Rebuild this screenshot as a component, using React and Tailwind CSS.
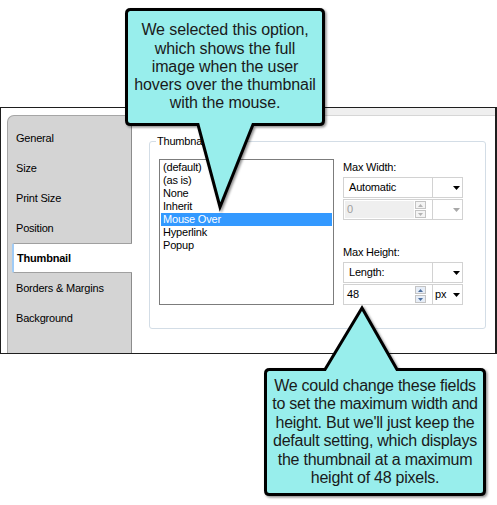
// App.jsx — image properties dialog (Thumbnail tab) with two annotation callouts.

const TABS = ['General', 'Size', 'Print Size', 'Position', 'Thumbnail', 'Borders & Margins', 'Background']
const OPTIONS = ['(default)', '(as is)', 'None', 'Inherit', 'Mouse Over', 'Hyperlink', 'Popup']

function Arrow({ muted }) {
  return (
    <svg width="7" height="4" viewBox="0 0 7 4" className="block">
      <path d="M0 0 H7 L3.5 4 Z" fill={muted ? '#a8a8a8' : '#000'} />
    </svg>
  )
}

function Spinner({ muted }) {
  const fg = muted ? '#b4b4b4' : '#4d6f9e'
  const bg = muted ? '#f4f4f4' : '#e6edf7'
  return (
    <div className="flex h-[17px] w-[11px] flex-col gap-px">
      {[0, 1].map((i) => (
        <div key={i} className="flex flex-1 items-center justify-center border border-[#c4c4c4]" style={{ backgroundColor: bg }}>
          <svg width="5" height="3" viewBox="0 0 5 3" className="block">
            <path d={i === 0 ? 'M0 3 H5 L2.5 0 Z' : 'M0 0 H5 L2.5 3 Z'} fill={fg} />
          </svg>
        </div>
      ))}
    </div>
  )
}

function Select({ children, muted }) {
  return (
    <div className="flex h-[21px] w-[120px] border border-[#d2d2d2]">
      <div className="flex w-[89px] items-center border-r border-[#d2d2d2] pl-[5px]">{children}</div>
      <div className="flex flex-1 items-center justify-end pr-[2px]">
        <Arrow muted={muted} />
      </div>
    </div>
  )
}

function NumberRow({ value, unit, muted }) {
  return (
    <div className="flex h-[21px] w-[120px] border border-[#d2d2d2]">
      <div className="flex w-[89px] items-center gap-[1px] border-r border-[#d2d2d2] p-px">
        <div className={`flex h-full w-[69px] items-center pl-[2px] ${muted ? 'bg-[#efefef] text-[#a0a0a0]' : 'text-black'}`}>
          {value}
        </div>
        <Spinner muted={muted} />
      </div>
      <div className="flex flex-1 items-center justify-between pl-[2px] pr-[2px]">
        <span>{unit}</span>
        <Arrow muted={muted} />
      </div>
    </div>
  )
}

function Dialog() {
  return (
    <div className="flex h-[247px] border-y border-l border-r-2 border-[#1e1e1e] text-[11px] tracking-[-0.2px] text-black">
      {/* tab strip */}
      <div className="w-[131px] shrink-0 pl-[6px] pt-[7px]">
        <div className="h-full rounded-tl-[7px] border-l border-t border-r border-l-[#a6a6a6] border-t-[#a6a6a6] border-r-[#8c8c8c] bg-[#d4d4d4] pt-[7px]">
          {TABS.map((t) =>
            t === 'Thumbnail' ? (
              <div
                key={t}
                className="relative z-10 -mr-px ml-[4px] flex h-[30px] items-center rounded-l-[2px] border-y border-l-2 border-y-[#a0a0a0] border-l-[#9fcbf6] bg-white pl-[3px] font-bold"
              >
                {t}
              </div>
            ) : (
              <div key={t} className="flex h-[30px] items-center pl-[8px]">
                {t}
              </div>
            )
          )}
        </div>
      </div>

      {/* page */}
      <div className="flex-1">
        <div className="h-[8px] border-b border-[#d6d6d6] bg-[#efefef]" />
        <div className="relative ml-[17px] mt-[25px] h-[188px] w-[337px] rounded-[3px] border border-[#d3dde6]">
          <span className="absolute -top-[8px] left-[6px] bg-white px-px leading-[14px]">Thumbnail</span>
          <div className="flex gap-[9px] pl-[9px] pt-[17px]">
            <div className="h-[146px] w-[175px] border border-[#7c7c7c] p-px">
              {OPTIONS.map((o) => (
                <div
                  key={o}
                  className={`h-[13px] pl-[2px] leading-[13px] ${o === 'Mouse Over' ? 'bg-[#3399ff] text-white' : ''}`}
                >
                  {o}
                </div>
              ))}
            </div>
            <div className="flex w-[120px] flex-col">
              <div className="h-[16px] leading-[16px]">Max Width:</div>
              <div className="mt-[2px]">
                <Select>Automatic</Select>
              </div>
              <div className="mt-px">
                <NumberRow value="0" unit="" muted />
              </div>
              <div className="mt-[24px] h-[16px] leading-[16px]">Max Height:</div>
              <div className="mt-[2px]">
                <Select>Length:</Select>
              </div>
              <div className="mt-px">
                <NumberRow value="48" unit="px" />
              </div>
            </div>
          </div>
        </div>
      </div>
    </div>
  )
}

function Callouts() {
  const fill = '#98eeec'
  return (
    <>
      <svg className="pointer-events-none absolute inset-0" width="497" height="505" viewBox="0 0 497 505">
        <defs>
          <filter id="sh" x="-10%" y="-10%" width="120%" height="120%">
            <feDropShadow dx="1.5" dy="1.5" stdDeviation="0.8" floodColor="#000" floodOpacity="0.45" />
          </filter>
        </defs>
        <path
          d="M130.5 9.5 H319.5 Q323.5 9.5 323.5 13.5 V120.5 Q323.5 124.5 319.5 124.5 H253 L220 207 L198 124.5 H130.5 Q126.5 124.5 126.5 120.5 V13.5 Q126.5 9.5 130.5 9.5 Z"
          fill={fill}
          stroke="#000"
          strokeWidth="3"
          strokeLinejoin="miter"
          filter="url(#sh)"
        />
        <path
          d="M269.5 369.5 H325 L362 308 L397 369.5 H480.5 Q484.5 369.5 484.5 373.5 V490.5 Q484.5 494.5 480.5 494.5 H269.5 Q265.5 494.5 265.5 490.5 V373.5 Q265.5 369.5 269.5 369.5 Z"
          fill={fill}
          stroke="#000"
          strokeWidth="3"
          strokeLinejoin="miter"
          filter="url(#sh)"
        />
      </svg>

      <div className="absolute left-[128px] top-[11px] flex h-[112px] w-[194px] flex-col items-center justify-center whitespace-nowrap text-center text-[16px] leading-[18.25px] tracking-[-0.1px] text-[#1a1a1a]">
        <span>We selected this option,</span>
        <span>which shows the full</span>
        <span>image when the user</span>
        <span>hovers over the thumbnail</span>
        <span>with the mouse.</span>
      </div>

      <div className="absolute left-[267px] top-[371px] flex h-[122px] w-[216px] flex-col items-center justify-center whitespace-nowrap text-center text-[16px] leading-[18.5px] tracking-[-0.25px] text-[#1a1a1a]">
        <span>We could change these fields</span>
        <span>to set the maximum width and</span>
        <span>height. But we'll just keep the</span>
        <span>default setting, which displays</span>
        <span>the thumbnail at a maximum</span>
        <span>height of 48 pixels.</span>
      </div>
    </>
  )
}

export default function App() {
  return (
    <div className="relative h-[505px] w-[497px] overflow-hidden bg-white font-['Liberation_Sans',Arial,sans-serif]">
      <div className="pt-[107px]">
        <Dialog />
      </div>
      <Callouts />
    </div>
  )
}
